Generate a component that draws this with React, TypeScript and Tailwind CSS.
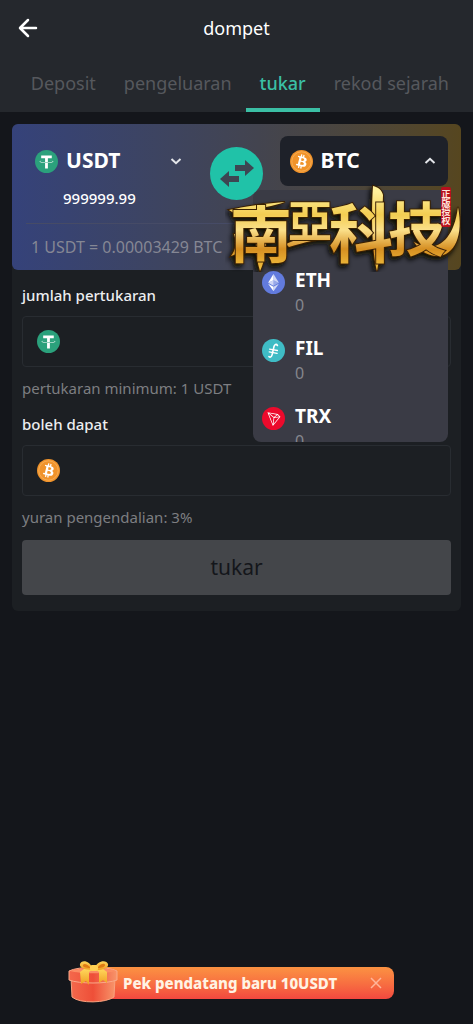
import { useState } from "react";

type Coin = "USDT" | "BTC" | "ETH" | "FIL" | "TRX";

const coinColors: Record<Coin, string> = {
  USDT: "#2ba17c",
  BTC: "#f0932b",
  ETH: "#627bdd",
  FIL: "#3fbcc5",
  TRX: "#ec0a2c",
};

function CoinIcon({ coin }: { coin: Coin }) {
  return (
    <svg viewBox="0 0 32 32" className="size-[23px] shrink-0" aria-hidden="true">
      <circle cx="16" cy="16" r="16" fill={coinColors[coin]} />
      {coin === "USDT" && (
        <path
          fill="#fff"
          d="M17.922 17.383v-.002c-.11.008-.677.042-1.942.042-1.01 0-1.721-.03-1.971-.042v.003c-3.888-.171-6.79-.848-6.79-1.658 0-.809 2.902-1.486 6.79-1.66v2.644c.254.018.982.061 1.988.061 1.207 0 1.812-.05 1.925-.06v-2.643c3.88.173 6.775.85 6.775 1.658 0 .81-2.895 1.485-6.775 1.657m0-3.59v-2.366h5.414V7.819H8.595v3.608h5.414v2.365c-4.4.202-7.709 1.074-7.709 2.118 0 1.044 3.309 1.915 7.709 2.118v7.582h3.913v-7.584c4.393-.202 7.694-1.073 7.694-2.116 0-1.043-3.301-1.914-7.694-2.117"
        />
      )}
      {coin === "BTC" && (
        <>
          <circle cx="16" cy="16" r="13.5" fill="none" stroke="#f8b562" strokeWidth="1" />
          <path
            fill="#fff"
            fillRule="evenodd"
            d="M23.189 14.02c.314-2.096-1.283-3.223-3.465-3.975l.708-2.84-1.728-.43-.69 2.765c-.454-.114-.92-.22-1.385-.326l.695-2.783L15.596 6l-.708 2.839c-.376-.086-.746-.17-1.104-.26l.002-.009-2.384-.595-.46 1.846s1.283.294 1.256.312c.7.175.826.638.805 1.006l-.806 3.235c.048.012.11.03.18.057l-.183-.045-1.13 4.532c-.086.212-.303.531-.793.41.018.025-1.256-.313-1.256-.313l-.858 1.978 2.25.561c.418.105.828.215 1.231.318l-.715 2.872 1.727.43.708-2.84c.472.127.93.245 1.378.357l-.706 2.828 1.728.43.715-2.866c2.948.558 5.164.333 6.097-2.333.752-2.146-.037-3.385-1.588-4.192 1.13-.26 1.98-1.003 2.207-2.538zm-3.95 5.538c-.533 2.147-4.148.986-5.32.695l.95-3.805c1.172.293 4.929.872 4.37 3.11zm.535-5.569c-.487 1.953-3.495.96-4.47.717l.86-3.45c.975.243 4.118.696 3.61 2.733z"
          />
        </>
      )}
      {coin === "ETH" && (
        <g fill="#fff">
          <path d="M16 4v8.9l7.5 3.3z" opacity=".7" />
          <path d="M16 4 8.5 16.2l7.5-3.3z" />
          <path d="M16 22v6l7.5-10.4z" opacity=".7" />
          <path d="M16 28v-6l-7.5-4.4z" />
          <path d="m16 20.6 7.5-4.4-7.5-3.3z" opacity=".35" />
          <path d="m8.5 16.2 7.5 4.4v-7.7z" opacity=".7" />
        </g>
      )}
      {coin === "FIL" && (
        <g fill="none" stroke="#fff" strokeLinecap="round">
          <path d="M21.5 9c-1.600-2.600-4-1.500-4.800 1.500l-2.700 11.500c-.7 3-2.600 4-4.300 2.500" strokeWidth="2.200" />
          <path d="m10.500 14 11 2M10 18l11 2" strokeWidth="1.800" />
        </g>
      )}
      {coin === "TRX" && (
        <path
          fill="#fff"
          d="M21.932 9.913L7.5 7.257l7.595 19.112 10.583-12.894-3.746-3.562zm-.232 1.170l2.208 2.099-6.038 1.093 3.830-3.192zm-5.142 2.973l-6.364-5.278 10.402 1.914-4.038 3.364zm-.453.934l-1.038 8.580L9.472 9.487l6.633 5.502zm.960.455l6.687-1.210-7.670 9.343.983-8.133z"
        />
      )}
    </svg>
  );
}

function Chevron({ up = false }: { up?: boolean }) {
  return (
    <svg viewBox="0 0 12 12" className="ml-auto size-3 shrink-0" fill="none" stroke="#e4e6ea" strokeWidth="2" aria-hidden="true">
      <path d={up ? "M1.500 8 6 3.800 10.500 8" : "M1.500 4 6 8.200 10.500 4"} />
    </svg>
  );
}

function BrandLogo() {
  return (
    <svg viewBox="0 0 242 88" className="h-[88px] w-[242px]" role="img" aria-label="南亞科技">
      <defs>
        <linearGradient id="gold" x1="0" y1="8" x2="0" y2="84" gradientUnits="userSpaceOnUse">
          <stop offset="0" stopColor="#fff09a" />
          <stop offset=".3" stopColor="#f3cd52" />
          <stop offset=".5" stopColor="#fbe08a" />
          <stop offset=".75" stopColor="#d68f22" />
          <stop offset="1" stopColor="#f0bd3c" />
        </linearGradient>
        <filter id="shade" x="-10%" y="-10%" width="120%" height="130%">
          <feDropShadow dx="-2" dy="3" stdDeviation="2.500" floodColor="#0b0805" floodOpacity="1" />
        </filter>
      </defs>
      <g filter="url(#shade)">
        <g
          fill="url(#gold)"
          stroke="#3a2006"
          strokeWidth="2"
          paintOrder="stroke"
          fontWeight="700"
          fontFamily="'Noto Sans CJK TC', 'Noto Sans CJK SC', sans-serif"
        >
          <path d="M4 26c13-3 30-6 56-8-15 5-35 8-48 13z" />
          <path d="M9 50c3 9 2 15-3 22 8-2 12-10 12-22z" />
          <path d="M31 56h10c0 12-2 23-6 31-3-9-4-19-4-31z" />
          <path d="M61 60c13-7 31-9 45-6-13 1-26 4-42 9z" />
          <path d="M148 2c5 1 9 4 10 9-1 28-1 51-6 76-5-19-6-56-4-85z" />
          <path d="M189 58c18 11 39 4 44-35 6 29-4 50-22 49-10-1-17-6-22-14z" />
          <text x="5" y="74" fontSize="62">南</text>
          <text x="63" y="54" fontSize="44">亞</text>
          <text x="104" y="73" fontSize="64">科</text>
          <text x="163" y="67" fontSize="58">技</text>
        </g>
      </g>
      <rect x="216" y="3" width="10" height="40" rx="2" fill="#b80f1d" />
      <text
        x="221"
        y="5"
        fill="#ffe5dc"
        fontSize="9"
        fontWeight="700"
        fontFamily="'Noto Sans CJK SC', sans-serif"
        className="[writing-mode:vertical-rl]"
      >
        正版授权
      </text>
    </svg>
  );
}

function GiftBox() {
  return (
    <svg viewBox="0 0 50 43" className="h-[43px] w-[50px]" aria-hidden="true">
      <defs>
        <linearGradient id="box" x1="0" y1="0" x2="1" y2="0">
          <stop offset="0" stopColor="#f4694c" />
          <stop offset=".5" stopColor="#ee4f38" />
          <stop offset="1" stopColor="#f8946a" />
        </linearGradient>
        <linearGradient id="ribbon" x1="0" y1="0" x2="0" y2="1">
          <stop offset="0" stopColor="#ffd65c" />
          <stop offset="1" stopColor="#ef9c20" />
        </linearGradient>
      </defs>
      <path d="M3 18h44l-1 19c-8 6-34 7-42 0z" fill="url(#box)" stroke="#f9a27f" />
      <path d="M1 11c10-5 38-5 48 0v9c-10 4-38 4-48 0z" fill="url(#box)" stroke="#f9a98a" />
      <path d="M2 11c10-4 36-4 46 0-10 3-36 3-46 0z" fill="#fb8d64" />
      <path d="m16 9-4 3 1 12 5-3 3 4V12l5-3zM35 9l4 3v11l-4-3-4 3V12l-5-3z" fill="url(#ribbon)" />
      <path d="M25 9C21-1 13 0 12 4s5 6 13 6c9 1 16-2 15-6S30-1 26 9z" fill="url(#ribbon)" />
      <path d="M22 7c-3-3-6-4-7-2s3 3 7 3zm8 0c3-4 7-4 7-2s-3 3-7 3z" fill="#e07b14" />
      <rect x="22" y="5" width="8" height="6" rx="2" fill="#ffd052" />
    </svg>
  );
}

const tabs = ["Deposit", "pengeluaran", "tukar", "rekod sejarah"];
const options: Coin[] = ["ETH", "FIL", "TRX"];

function AmountField({ id, label, coin, hint }: { id: string; label: string; coin: Coin; hint: string }) {
  return (
    <div>
      <label htmlFor={id} className="block text-[15px] leading-[26px] font-medium text-[#eceef0]">
        {label}
      </label>
      <div className="my-2 flex h-[51px] items-center gap-3 rounded-[4px] border border-[#282c31] px-3.5">
        <CoinIcon coin={coin} />
        <input id={id} type="text" inputMode="decimal" className="h-full min-w-0 flex-1 bg-transparent text-base text-white outline-none" />
      </div>
      <p className="text-[15px] leading-[26px] text-[#7d7e81]">{hint}</p>
    </div>
  );
}

export default function App() {
  const [active, setActive] = useState("tukar");
  const [showPromo, setShowPromo] = useState(true);

  return (
    <div className="min-h-screen bg-[#14161b] font-['Noto_Sans','Open_Sans',sans-serif] text-white">
      <header className="bg-[#25282d]">
        <div className="grid h-14 grid-cols-[56px_1fr_56px] items-center">
          <button type="button" aria-label="Kembali" className="flex justify-center">
            <svg viewBox="0 0 20 20" className="size-5" fill="none" stroke="#fff" strokeWidth="2.500" strokeLinecap="round" strokeLinejoin="round" aria-hidden="true">
              <path d="M10 2 2 10l8 8M2.500 10H18" />
            </svg>
          </button>
          <h1 className="text-center text-[18px]">dompet</h1>
        </div>
        <nav className="flex h-14 justify-end pr-2.5 whitespace-nowrap">
          {tabs.map((tab) => (
            <button
              key={tab}
              type="button"
              onClick={() => setActive(tab)}
              className={
                tab === active
                  ? "border-b-4 border-[#3bbfa5] px-3.5 pt-0.5 text-[18px] font-medium text-[#3bbfa5]"
                  : "border-b-4 border-transparent px-3.5 pt-0.5 text-[18px] text-[#56585d]"
              }
            >
              {tab}
            </button>
          ))}
        </nav>
      </header>

      <main className="p-3">
        <section className="rounded-md bg-[#1c1f23]">
          <div className="relative rounded-md bg-linear-to-r from-[#35427a] via-[#43444f] via-55% to-[#56461f] pt-3">
            <div className="grid grid-cols-[1fr_86px_1fr] items-center px-[13px]">
              <div>
                <button type="button" aria-haspopup="listbox" className="flex h-[50px] w-full items-center gap-2 px-2.5 pr-3">
                  <CoinIcon coin="USDT" />
                  <span className="text-[21px] font-bold">USDT</span>
                  <Chevron />
                </button>
                <p className="pl-[38px] text-[15px] leading-[25px] font-medium">999999.99</p>
              </div>
              <button type="button" aria-label="Tukar arah" className="flex size-[53px] items-center justify-center justify-self-center rounded-full bg-[#20c2a8]">
                <svg viewBox="0 0 34 28" className="h-7 w-[34px]" fill="#3d4652" aria-hidden="true">
                  <path d="M15 5h10V0l9 8-9 8v-5H15z" />
                  <path d="M19 16H9v-5l-9 8 9 8v-5h10z" />
                </svg>
              </button>
              <div className="relative self-start">
                <button type="button" aria-haspopup="listbox" aria-expanded="true" className="flex h-[50px] w-full items-center gap-2 rounded-lg bg-[#1e2129] px-2.5 pr-3">
                  <CoinIcon coin="BTC" />
                  <span className="text-[21px] font-bold">BTC</span>
                  <Chevron up />
                </button>
                <ul role="listbox" aria-label="Mata wang" className="absolute top-[54px] right-0 z-10 h-[252px] w-[195px] overflow-hidden rounded-lg bg-[#3a3b45] pt-[77px]">
                  {options.map((coin) => (
                    <li key={coin} role="option" aria-selected="false" className="flex h-[68px] gap-2.5 px-[9px]">
                      <div className="pt-1">
                        <CoinIcon coin={coin} />
                      </div>
                      <div>
                        <p className="text-[19px] leading-[26px] font-bold">{coin}</p>
                        <p className="text-base leading-6 text-[#85868d]">0</p>
                      </div>
                    </li>
                  ))}
                </ul>
              </div>
            </div>
            <div className="mx-3.5 mt-3 border-t border-[#464b66] pl-[5px] text-base leading-[46px] text-[#858794]">
              1 USDT = 0.00003429 BTC
            </div>
            <div className="pointer-events-none absolute -right-1.5 -bottom-0.5 z-20">
              <BrandLogo />
            </div>
          </div>

          <form className="flex flex-col gap-2.5 px-2.5 pt-3 pb-4" onSubmit={(e) => e.preventDefault()}>
            <AmountField id="from" label="jumlah pertukaran" coin="USDT" hint="pertukaran minimum: 1 USDT" />
            <AmountField id="to" label="boleh dapat" coin="BTC" hint="yuran pengendalian: 3%" />
            <button type="submit" className="h-[55px] rounded-[4px] bg-[#44464a] text-[21px] text-[#14161b]">
              tukar
            </button>
          </form>
        </section>
      </main>

      {showPromo && (
        <aside className="fixed inset-x-0 bottom-[25px] flex justify-center pr-[11px]">
          <div className="relative flex items-center pl-6">
            <div className="absolute bottom-[-4px] left-0">
              <GiftBox />
            </div>
            <div className="flex h-8 w-[302px] items-center justify-between rounded-lg bg-linear-to-b from-[#fb9242] to-[#f2473f] pr-3 pl-[31px]">
              <span className="text-[15px] font-extrabold whitespace-nowrap text-[#fff3e4]">Pek pendatang baru 10USDT</span>
              <button type="button" aria-label="Tutup" onClick={() => setShowPromo(false)}>
                <svg viewBox="0 0 12 12" className="size-3" stroke="#ffb59a" strokeWidth="1.500" aria-hidden="true">
                  <path d="m1 1 10 10M11 1 1 11" />
                </svg>
              </button>
            </div>
          </div>
        </aside>
      )}
    </div>
  );
}
